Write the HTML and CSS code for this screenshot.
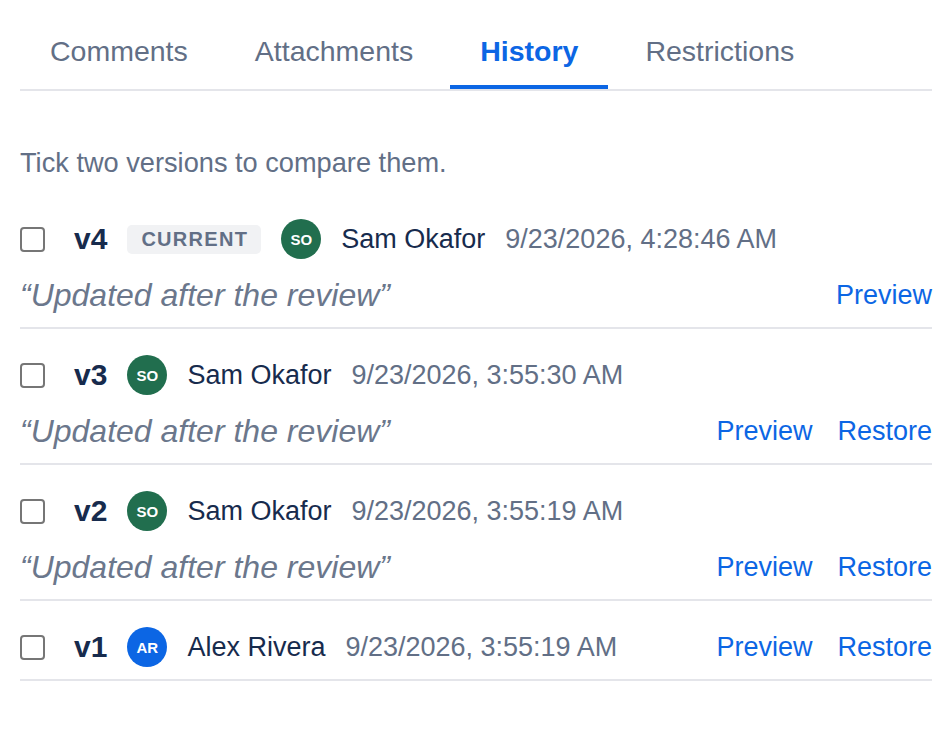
FILE: index.html
```html
<!DOCTYPE html>
<html lang="en">

<head>
    <meta charset="UTF-8">
    <meta name="viewport" content="width=device-width, initial-scale=1.0">
    <title>Page history</title>
    <link rel="stylesheet" href="styles.css">
</head>

<body>
    <div class="panel">
        <div class="tabs">
            <button class="tab">Comments</button>
            <button class="tab">Attachments</button>
            <button class="tab active">History</button>
            <button class="tab">Restrictions</button>
        </div>

        <p class="hint">Tick two versions to compare them.</p>

        <ul class="versions">
            <li class="version">
                <div class="version-main">
                    <div class="meta">
                        <input type="checkbox" class="tick">
                        <span class="num">v4</span>
                        <span class="badge">Current</span>
                        <span class="avatar green">SO</span>
                        <span class="name">Sam Okafor</span>
                        <span class="date">9/23/2026, 4:28:46 AM</span>
                    </div>
                    <p class="note">“Updated after the review”</p>
                </div>
                <div class="actions">
                    <a href="#" class="link">Preview</a>
                </div>
            </li>
            <li class="version">
                <div class="version-main">
                    <div class="meta">
                        <input type="checkbox" class="tick">
                        <span class="num">v3</span>
                        <span class="avatar green">SO</span>
                        <span class="name">Sam Okafor</span>
                        <span class="date">9/23/2026, 3:55:30 AM</span>
                    </div>
                    <p class="note">“Updated after the review”</p>
                </div>
                <div class="actions">
                    <a href="#" class="link">Preview</a>
                    <a href="#" class="link">Restore</a>
                </div>
            </li>
            <li class="version">
                <div class="version-main">
                    <div class="meta">
                        <input type="checkbox" class="tick">
                        <span class="num">v2</span>
                        <span class="avatar green">SO</span>
                        <span class="name">Sam Okafor</span>
                        <span class="date">9/23/2026, 3:55:19 AM</span>
                    </div>
                    <p class="note">“Updated after the review”</p>
                </div>
                <div class="actions">
                    <a href="#" class="link">Preview</a>
                    <a href="#" class="link">Restore</a>
                </div>
            </li>
            <li class="version">
                <div class="version-main">
                    <div class="meta">
                        <input type="checkbox" class="tick">
                        <span class="num">v1</span>
                        <span class="avatar blue">AR</span>
                        <span class="name">Alex Rivera</span>
                        <span class="date">9/23/2026, 3:55:19 AM</span>
                    </div>
                </div>
                <div class="actions">
                    <a href="#" class="link">Preview</a>
                    <a href="#" class="link">Restore</a>
                </div>
            </li>
        </ul>
    </div>
</body>

</html>
```

FILE: styles.css
```css
body {
    margin: 0;
    padding: 20px;
    font-family: 'Liberation Sans', Arial, sans-serif;
    color: #172b4d;
    background: #fff;
}

.tabs {
    display: flex;
    gap: 7px;
    border-bottom: 2px solid #e4e5ea;
}

.tab {
    background: none;
    border: none;
    border-bottom: 4px solid transparent;
    padding: 14px 30px 17px;
    font-family: inherit;
    font-size: 28.5px;
    line-height: 34px;
    color: #626f86;
    cursor: pointer;
}

.tab.active {
    color: #0c66e4;
    font-weight: bold;
    border-bottom-color: #0c66e4;
}

.hint {
    margin: 56px 0 14px;
    font-size: 27.2px;
    line-height: 32px;
    color: #626f86;
}

.versions {
    list-style: none;
    margin: 0;
    padding: 0;
}

.version {
    display: flex;
    align-items: flex-end;
    justify-content: space-between;
    padding: 26px 0 12px;
    border-bottom: 2px solid #e4e5ea;
}

.meta {
    display: flex;
    align-items: center;
    gap: 20px;
    height: 40px;
}

.tick {
    appearance: none;
    width: 25px;
    height: 25px;
    margin: 0 9px 0 0;
    border: 2px solid #767676;
    border-radius: 4px;
    background: #fff;
}

.num {
    font-size: 30px;
    font-weight: bold;
    color: #172b4d;
}

.badge {
    background: #f1f2f4;
    color: #626f86;
    font-size: 20px;
    font-weight: bold;
    letter-spacing: 1.3px;
    text-transform: uppercase;
    padding: 3px 13px 3px 14px;
    border-radius: 5px;
    line-height: 23px;
}

.avatar {
    width: 40px;
    height: 40px;
    border-radius: 50%;
    display: flex;
    align-items: center;
    justify-content: center;
    color: #fff;
    font-size: 15px;
    font-weight: bold;
}

.avatar.green {
    background: #216e4e;
}

.avatar.blue {
    background: #0c66e4;
}

.name {
    font-size: 27px;
    color: #172b4d;
}

.date {
    font-size: 27px;
    color: #626f86;
}

.note {
    margin: 18px 0 2px;
    font-size: 32px;
    line-height: 36px;
    font-style: italic;
    color: #6b778c;
}

.actions {
    display: flex;
    gap: 25px;
    height: 40px;
    align-items: center;
}

.link {
    font-size: 27px;
    color: #0c66e4;
    text-decoration: none;
}
```
